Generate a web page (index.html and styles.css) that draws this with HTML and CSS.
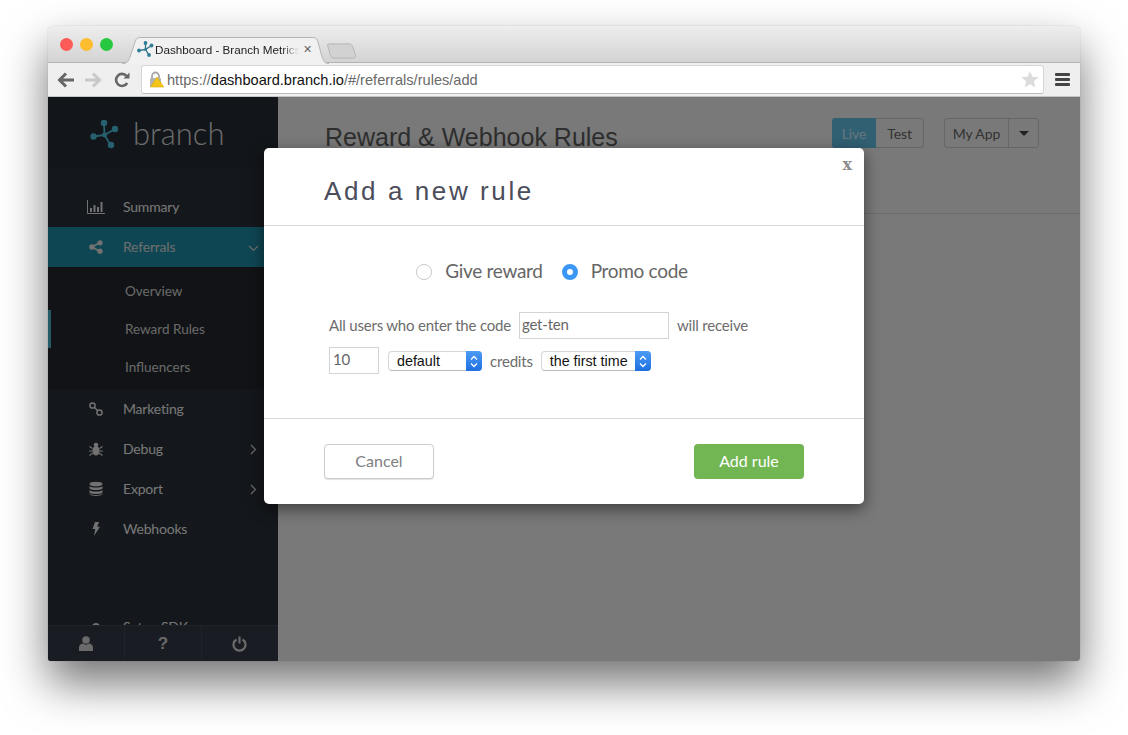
FILE: index.html
```html
<!DOCTYPE html>
<html>
    <head>
        <meta charset="UTF-8">
        <title>Dashboard - Branch Metrics</title>
        <link rel="stylesheet" href="styles.css">
    </head>
    <body>
        <div class="window">
            <div class="titlebar">
                <span class="light red"></span>
                <span class="light yellow"></span>
                <span class="light green"></span>
                <div class="tab">
                    <svg class="tab-bg" width="208" height="27" viewBox="0 0 208 27"><path d="M0 26.500C5 26.500 6 25 8 20L13 5C14 2 15 .5 19 .5H190C194 .5 195 2 196 5L200 20C202 25 203 26.500 207 26.500" fill="#f1f1f1" stroke="#b4b4b4"/></svg>
                    <svg class="tab-icon" width="18" height="16" viewBox="0 0 18 16"><g stroke="#2f6f86" stroke-width="1.300" fill="none"><path d="M2 9.500L8.500 8.500L8.500 2M8.500 8.500L14.500 4.500M8.500 8.500L12 14"/></g><g fill="#2f7d96"><circle cx="2" cy="9.500" r="1.900"/><circle cx="8.500" cy="2" r="1.900"/><circle cx="14.500" cy="4.500" r="1.900"/><circle cx="12" cy="14" r="1.900"/><circle cx="8.500" cy="8.500" r="1.500"/></g></svg>
                    <span class="tab-title">Dashboard - Branch Metrics</span>
                    <span class="tab-close">&#10005;</span>
                </div>
                <svg class="newtab" width="31" height="16" viewBox="0 0 33 18"><path d="M2 1H25C27 1 28 2 29 4L32 13C33 16 32 17 29 17H8C6 17 5 16 4 14L1 3C.6 1.600 1 1 2 1Z" fill="#d2d2d2" stroke="#b2b2b2"/></svg>
            </div>
            <div class="toolbar">
                <svg class="tool back" width="18" height="16" viewBox="0 0 18 16"><path d="M9 1.500L2.500 8L9 14.500M3 8H17" fill="none" stroke="#666" stroke-width="3"/></svg>
                <svg class="tool forward" width="18" height="16" viewBox="0 0 18 16"><path d="M9 1.500L15.500 8L9 14.500M15 8H1" fill="none" stroke="#c9c9c9" stroke-width="3"/></svg>
                <svg class="tool reload" width="16" height="16" viewBox="0 0 16 16"><path d="M13.200 11A6 6 0 1 1 12.600 4" fill="none" stroke="#666" stroke-width="2.600"/><path d="M9.500 6.500H15.500V.5Z" fill="#666"/></svg>
                <div class="urlbar">
                    <svg class="lock" width="16" height="17" viewBox="0 0 16 17"><path d="M4 8V5a3.500 3.500 0 0 1 7 0v3" fill="none" stroke="#a8a8a8" stroke-width="1.800"/><rect x="2" y="7" width="11" height="9" rx="1" fill="#b5b5b5"/><path d="M9 6L15.800 16H2.500Z" fill="#f5c518" stroke="#d9a90c" stroke-width=".6"/></svg>
                    <span class="url">https://<b>dashboard.branch.io</b>/#/referrals/rules/add</span>
                    <svg class="star" width="18" height="17" viewBox="0 0 18 17"><path d="M9 0L11.400 5.800L17.600 6.300L12.900 10.300L14.300 16.500L9 13.200L3.700 16.500L5.100 10.300L.4 6.300L6.600 5.800Z" fill="#dcdcdc"/></svg>
                </div>
                <div class="hamburger"><span></span><span></span><span></span></div>
            </div>
            <div class="content">
                <div class="sidebar">
                    <div class="logo">
                        <svg width="30" height="30" viewBox="0 0 30 30"><g stroke="#4fc3e0" stroke-width="1.800" fill="none"><path d="M3.500 17.500L14.500 16L14 4M14.500 16L25 10M14.500 16L20.500 26"/></g><g fill="#4fc3e0"><circle cx="3.500" cy="17.500" r="3.200"/><circle cx="14" cy="4" r="3.200"/><circle cx="25" cy="10" r="3.200"/><circle cx="21" cy="26" r="3.200"/><circle cx="14.500" cy="16" r="2.400"/></g></svg>
                        <span class="logo-text">branch</span>
                    </div>
                    <div class="nav">
                        <div class="nav-item">
                            <svg class="nav-icon" width="18" height="14" viewBox="0 0 18 14"><path d="M.5 0V13.500H18" fill="none" stroke="#e4e4e4"/><path d="M3 8h2v4H3zM6.500 5h2v7h-2zM10 7h2v5h-2zM13.500 2h2v10h-2z" fill="#e4e4e4"/></svg>
                            <span>Summary</span>
                        </div>
                        <div class="nav-item active">
                            <svg class="nav-icon" width="14" height="14" viewBox="0 0 14 14"><path d="M11 2.500L3 7L11 11.500" fill="none" stroke="#e4e4e4" stroke-width="1.600"/><circle cx="11" cy="2.800" r="2.600" fill="#e4e4e4"/><circle cx="3" cy="7" r="2.800" fill="#e4e4e4"/><circle cx="11" cy="11.200" r="2.600" fill="#e4e4e4"/></svg>
                            <span>Referrals</span>
                            <svg class="chev" width="11" height="7" viewBox="0 0 11 7"><path d="M1 1L5.500 5.500L10 1" fill="none" stroke="#d8d8d8" stroke-width="1.200"/></svg>
                        </div>
                        <div class="submenu">
                            <div class="sub-item">Overview</div>
                            <div class="sub-item current">Reward Rules</div>
                            <div class="sub-item">Influencers</div>
                        </div>
                        <div class="nav-item">
                            <svg class="nav-icon" width="14" height="14" viewBox="0 0 14 14"><g fill="none" stroke="#e4e4e4" stroke-width="1.500"><circle cx="3.500" cy="3.500" r="2.600"/><circle cx="10.500" cy="10.500" r="2.600"/><path d="M5 5L9 9"/></g></svg>
                            <span>Marketing</span>
                        </div>
                        <div class="nav-item">
                            <svg class="nav-icon" width="14" height="14" viewBox="0 0 14 14"><path d="M7 4.500C10 4.500 10.500 6.500 10.500 9C10.500 11.500 9 13.500 7 13.500C5 13.500 3.500 11.500 3.500 9C3.500 6.500 4 4.500 7 4.500Z" fill="#e4e4e4"/><circle cx="7" cy="3" r="2.300" fill="#e4e4e4"/><path d="M.5 4.500L3.500 6.500M13.500 4.500L10.500 6.500M0 9H3.500M14 9H10.500M.5 13.500L4 11M13.500 13.500L10 11" stroke="#e4e4e4" stroke-width="1.100"/></svg>
                            <span>Debug</span>
                            <svg class="chev" width="7" height="11" viewBox="0 0 7 11"><path d="M1 1L5.500 5.500L1 10" fill="none" stroke="#d8d8d8" stroke-width="1.200"/></svg>
                        </div>
                        <div class="nav-item">
                            <svg class="nav-icon" width="14" height="15" viewBox="0 0 14 15"><ellipse cx="7" cy="2.500" rx="6.500" ry="2.300" fill="#e4e4e4"/><path d="M.5 4.500C2 6.500 12 6.500 13.500 4.500V7C12 9 2 9 .5 7ZM.5 8.500C2 10.500 12 10.500 13.500 8.500V11C12 13 2 13 .5 11ZM.5 12C2 14 12 14 13.500 12V12.800C12 15 2 15 .5 12.800Z" fill="#e4e4e4"/></svg>
                            <span>Export</span>
                            <svg class="chev" width="7" height="11" viewBox="0 0 7 11"><path d="M1 1L5.500 5.500L1 10" fill="none" stroke="#d8d8d8" stroke-width="1.200"/></svg>
                        </div>
                        <div class="nav-item">
                            <svg class="nav-icon" width="8" height="14" viewBox="0 0 8 14"><path d="M3 0H7L5.200 4.800H8L2 14L3.200 7H.5Z" fill="#e4e4e4"/></svg>
                            <span>Webhooks</span>
                        </div>
                        <div class="nav-item setup">
                            <svg class="nav-icon" width="8" height="14" viewBox="0 0 8 14"><circle cx="4" cy="7" r="4" fill="#e4e4e4"/></svg>
                            <span>Setup SDK</span>
                        </div>
                    </div>
                    <div class="bottom-bar">
                        <div class="bottom-cell">
                            <svg width="14" height="15" viewBox="0 0 14 15"><circle cx="7" cy="4" r="3.800" fill="#d4d4d4"/><path d="M0 15V11.500C0 9 2.500 7.500 4 7.500C5.500 9 8.500 9 10 7.500C11.500 7.500 14 9 14 11.500V15Z" fill="#d4d4d4"/></svg>
                        </div>
                        <div class="bottom-cell question">?</div>
                        <div class="bottom-cell">
                            <svg class="power" width="15" height="16" viewBox="0 0 15 16"><path d="M4.500 3.500A6 6 0 1 0 10.500 3.500M7.500 .5V7.500" fill="none" stroke="#d4d4d4" stroke-width="2.200"/></svg>
                        </div>
                    </div>
                </div>
                <div class="main">
                    <div class="main-head">
                        <h1>Reward &amp; Webhook Rules</h1>
                        <div class="btn-group mode">
                            <span class="btn on">Live</span>
                            <span class="btn test">Test</span>
                        </div>
                        <div class="btn-group app">
                            <span class="btn myapp">My App</span>
                            <span class="btn caret-btn"><span class="caret"></span></span>
                        </div>
                    </div>
                </div>
                <div class="overlay"></div>
                <div class="modal">
                    <span class="close">x</span>
                    <div class="modal-head">Add a new rule</div>
                    <div class="modal-body">
                        <div class="radios">
                            <span class="radio"></span>
                            <span class="radio-label first">Give reward</span>
                            <span class="radio checked"></span>
                            <span class="radio-label">Promo code</span>
                        </div>
                        <div class="form-row">
                            <span class="lift">All users who enter the code</span>
                            <span class="input code">get-ten</span>
                            <span class="lift">will receive</span>
                        </div>
                        <div class="form-row second">
                            <span class="input amount">10</span>
                            <span class="select default">default<span class="stepper"><svg width="8" height="13" viewBox="0 0 8 13"><path d="M1 4.500L4 1.500L7 4.500M1 8.500L4 11.500L7 8.500" fill="none" stroke="#fff" stroke-width="1.300"/></svg></span></span>
                            <span>credits</span>
                            <span class="select when">the first time<span class="stepper"><svg width="8" height="13" viewBox="0 0 8 13"><path d="M1 4.500L4 1.500L7 4.500M1 8.500L4 11.500L7 8.500" fill="none" stroke="#fff" stroke-width="1.300"/></svg></span></span>
                        </div>
                    </div>
                    <div class="modal-foot">
                        <span class="button cancel">Cancel</span>
                        <span class="button add">Add rule</span>
                    </div>
                </div>
            </div>
        </div>
    </body>
</html>
```

FILE: styles.css
```css
html, body {
    margin: 0;
    height: 100%;
}
body {
    background: #fff;
    padding: 26px 48px 0;
    box-sizing: border-box;
    overflow: hidden;
    font-family: "Lato", "Open Sans", sans-serif;
}
.window {
    width: 1032px;
    height: 635px;
    display: flex;
    flex-direction: column;
    border-radius: 5px 5px 3px 3px;
    overflow: hidden;
    box-shadow: 0 22px 45px rgba(0, 0, 0, .55), 0 0 1px rgba(0, 0, 0, .35);
}
.titlebar {
    height: 37px;
    flex: none;
    display: flex;
    align-items: flex-start;
    box-sizing: border-box;
    padding-left: 12px;
    background: linear-gradient(#eeeeee, #d3d3d3);
    border-bottom: 1px solid #b4b4b4;
}
.light {
    width: 13px;
    height: 13px;
    border-radius: 50%;
    margin: 12px 7px 0 0;
}
.light.red { background: #fc5b57; }
.light.yellow { background: #fdbd2e; }
.light.green { background: #27c840; }
.tab {
    position: relative;
    width: 207px;
    height: 26px;
    margin: 11px 0 0 2px;
    display: flex;
    align-items: center;
    padding: 0 0 2px 15px;
    box-sizing: border-box;
    font-family: "Liberation Sans", sans-serif;
    font-size: 11.700px;
    color: #222;
}
.tab-bg {
    position: absolute;
    left: 0;
    top: 0;
}
.tab-icon, .tab-title, .tab-close {
    position: relative;
}
.tab-title {
    width: 144px;
    white-space: nowrap;
    overflow: hidden;
    -webkit-mask-image: linear-gradient(to right, #000 88%, transparent);
    mask-image: linear-gradient(to right, #000 88%, transparent);
}
.tab-close {
    font-size: 11px;
    color: #666;
    margin-left: 4px;
}
.newtab {
    margin: 17px 0 0 -3px;
}
.toolbar {
    height: 34px;
    flex: none;
    display: flex;
    align-items: center;
    box-sizing: border-box;
    background: #efefef;
    border-bottom: 1px solid #c4c4c4;
}
.tool { flex: none; }
.back { margin-left: 9px; }
.forward { margin-left: 9px; }
.reload { margin-left: 12px; }
.urlbar {
    margin-left: 11px;
    width: 903px;
    height: 29px;
    box-sizing: border-box;
    display: flex;
    align-items: center;
    background: #fff;
    border: 1px solid #d6d6d6;
    border-bottom-color: #bdbdbd;
    border-radius: 3px;
    padding-left: 6px;
    font-family: "Liberation Sans", sans-serif;
    font-size: 14.600px;
    color: #6a6a6a;
}
.url {
    margin-left: 3px;
    flex: 1;
}
.url b {
    font-weight: normal;
    color: #111;
}
.star {
    margin-right: 4px;
}
.hamburger {
    margin-left: 11px;
    width: 15px;
    display: flex;
    flex-direction: column;
    gap: 2px;
}
.hamburger span {
    height: 3px;
    border-radius: 1px;
    background: #444;
}
.content {
    position: relative;
    flex: 1;
    display: flex;
    min-height: 0;
}
.sidebar {
    width: 230px;
    flex: none;
    display: flex;
    flex-direction: column;
    background: #282e36;
    color: #eee;
}
.logo {
    height: 70px;
    flex: none;
    display: flex;
    align-items: center;
    padding: 3px 0 0 42px;
    box-sizing: border-box;
    background: #252b32;
}
.logo-text {
    margin-left: 13px;
    font-size: 31px;
    font-weight: 300;
    color: #d8d8d8;
    position: relative;
    top: -1px;
}
.nav {
    flex: 1;
    min-height: 0;
    overflow: hidden;
    padding-top: 20px;
}
.nav-item {
    position: relative;
    height: 40px;
    display: flex;
    align-items: center;
    font-size: 14px;
    letter-spacing: -.2px;
    padding: 0 0 2px 75px;
    box-sizing: border-box;
}
.nav-icon {
    position: absolute;
    left: 48px;
    top: 50%;
    transform: translate(-50%, -50%);
}
.chev {
    position: absolute;
    left: 202px;
    top: 15px;
}
.active {
    background: #1f8ca6;
    color: #dcdcdc;
}
.active .chev {
    left: 200px;
    top: 18px;
}
.submenu {
    background: #22272d;
    height: 122px;
    padding-top: 5px;
    box-sizing: border-box;
}
.sub-item {
    height: 38px;
    line-height: 38px;
    padding-left: 77px;
    font-size: 13.500px;
    color: #d4d4d4;
    position: relative;
}
.sub-item.current::before {
    content: "";
    position: absolute;
    left: 0;
    top: 0;
    width: 3px;
    height: 38px;
    background: #4fb6ce;
}
.setup {
    margin-top: 58px;
}
.bottom-bar {
    height: 36px;
    flex: none;
    display: flex;
    background: #333b47;
    border-top: 1px solid #3f4855;
    box-sizing: border-box;
}
.bottom-cell {
    flex: 1;
    display: flex;
    align-items: center;
    justify-content: center;
    border-left: 1px solid #3f4855;
}
.bottom-cell:first-child {
    border-left: 0;
}
.question {
    font-family: "Liberation Sans", sans-serif;
    font-weight: bold;
    font-size: 17px;
    color: #d4d4d4;
}
.power {
    margin-right: 2px;
}
.main {
    flex: 1;
    background: #f2f2f2;
}
.main-head {
    height: 117px;
    box-sizing: border-box;
    border-bottom: 1px solid #d8d8d8;
    display: flex;
    align-items: flex-start;
    padding: 21px 41px 0 47px;
}
.main-head h1 {
    margin: 5px auto 0 0;
    font-family: "Liberation Sans", sans-serif;
    font-weight: normal;
    font-size: 25px;
    color: #5c5c5c;
}
.btn-group {
    display: flex;
    height: 30px;
    box-sizing: border-box;
    border: 1px solid #cdcdcd;
    border-radius: 3px;
    font-size: 14px;
    letter-spacing: -.1px;
    color: #666;
}
.mode {
    margin-right: 20px;
}
.btn {
    display: flex;
    align-items: center;
    justify-content: center;
}
.btn.on {
    width: 44px;
    margin: -1px 0 -1px -1px;
    border-radius: 3px 0 0 3px;
    background: #62c0e4;
    color: #cfeefb;
}
.btn.test {
    width: 47px;
}
.btn.myapp {
    width: 63px;
    border-right: 1px solid #cdcdcd;
}
.btn.caret-btn {
    width: 29px;
}
.caret {
    border-left: 5px solid transparent;
    border-right: 5px solid transparent;
    border-top: 5px solid #444;
}
.overlay {
    position: absolute;
    inset: 0;
    background: rgba(0, 0, 0, .5);
}
.modal {
    position: absolute;
    left: 216px;
    top: 51px;
    width: 600px;
    height: 356px;
    background: #fff;
    border-radius: 5px;
    box-shadow: 0 5px 15px rgba(0, 0, 0, .5);
    display: flex;
    flex-direction: column;
}
.close {
    position: absolute;
    right: 12px;
    top: 7px;
    font-family: "DejaVu Serif", serif;
    font-weight: bold;
    font-size: 16px;
    color: #8c8c8c;
}
.modal-head {
    height: 78px;
    flex: none;
    box-sizing: border-box;
    border-bottom: 1px solid #d9d9d9;
    padding: 28px 0 0 60px;
    font-family: "Liberation Sans", sans-serif;
    font-size: 26px;
    letter-spacing: 2.600px;
    color: #4b4d5a;
}
.modal-body {
    height: 193px;
    flex: none;
    box-sizing: border-box;
    border-bottom: 1px solid #d9d9d9;
    padding-top: 31px;
    color: #6c6c6c;
}
.radios {
    display: flex;
    align-items: center;
    justify-content: center;
    height: 26px;
    font-size: 19px;
    letter-spacing: -.3px;
    padding-right: 24px;
}
.radio {
    width: 16px;
    height: 16px;
    border: 1px solid #c8c8c8;
    border-radius: 50%;
    box-sizing: border-box;
    margin-top: 4px;
}
.radio.checked {
    border: 5px solid #3b96f5;
    background: #fff;
}
.radio-label {
    margin-left: 13px;
    color: #666;
}
.radio-label.first {
    margin-right: 19px;
}
.form-row {
    display: flex;
    align-items: center;
    gap: 8px;
    margin: 29px 0 0 65px;
    height: 27px;
    font-size: 15px;
    letter-spacing: -.2px;
}
.form-row.second {
    margin-top: 8px;
}
.lift {
    margin-bottom: 2px;
}
.input {
    height: 27px;
    box-sizing: border-box;
    border: 1px solid #d4d4d4;
    padding-left: 2px;
    line-height: 23px;
    color: #666;
}
.input.code {
    width: 150px;
}
.input.amount {
    width: 50px;
    padding-left: 3px;
    margin-right: 1px;
}
.select {
    position: relative;
    height: 20px;
    box-sizing: border-box;
    background: #fff;
    border: 1px solid #d6d6d6;
    border-bottom-color: #bbb;
    border-radius: 4px;
    font-family: "Liberation Sans", sans-serif;
    font-size: 14.300px;
    letter-spacing: 0;
    color: #111;
    line-height: 19px;
    padding-left: 8px;
    margin-top: 1px;
}
.select.default {
    width: 94px;
}
.select.when {
    width: 110px;
}
.stepper {
    position: absolute;
    right: -1px;
    top: -1px;
    width: 16px;
    height: 20px;
    border-radius: 0 4px 4px 0;
    background: linear-gradient(#4d9cf5, #1e6fe0);
    display: flex;
    align-items: center;
    justify-content: center;
}
.modal-foot {
    flex: 1;
    display: flex;
    justify-content: space-between;
    padding: 25px 60px 0;
}
.button {
    width: 110px;
    height: 35px;
    box-sizing: border-box;
    padding-bottom: 2px;
    border-radius: 4px;
    display: flex;
    align-items: center;
    justify-content: center;
    font-size: 16px;
}
.cancel {
    background: #fff;
    border: 1px solid #ccc;
    box-shadow: 0 1px 1px rgba(0, 0, 0, .12);
    color: #808080;
}
.add {
    background: #72b653;
    color: #fff;
}
```
